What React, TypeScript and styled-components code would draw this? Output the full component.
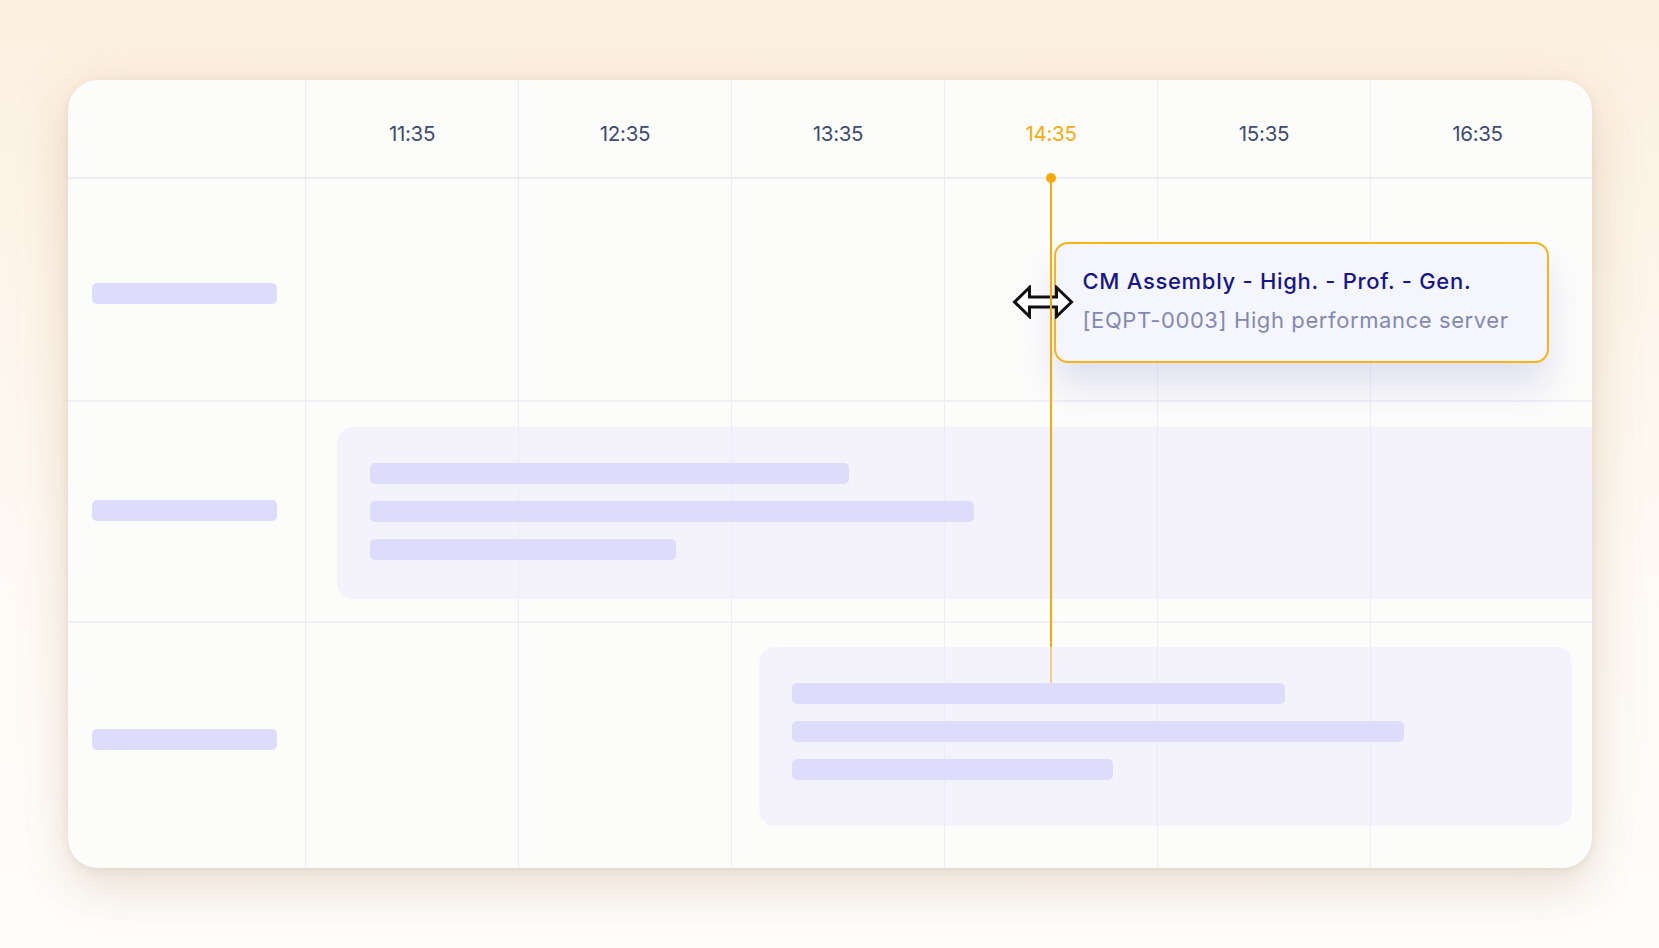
import React from "react";
import styled, { createGlobalStyle } from "styled-components";

// timeline scale: the first slot column starts at 11:05, one column per hour
const LABEL_COL = 237;
const HOUR_WIDTH = 213;
const DAY_START = 11 * 60 + 5;

const toX = (time: string) => {
  const [h, m] = time.split(":").map(Number);
  return LABEL_COL + ((h * 60 + m - DAY_START) * HOUR_WIDTH) / 60;
};

const SLOTS = ["11:35", "12:35", "13:35", "14:35", "15:35", "16:35"];
const NOW = "14:35";

interface Booking {
  start: string;
  end: string;
  top: number;
  height: number;
  lines: number[];
  coversNow?: boolean;
}

interface Resource {
  height: number;
  labelShift: number;
  booking?: Booking;
}

const resources: Resource[] = [
  { height: 223, labelShift: 4 },
  {
    height: 221,
    labelShift: -1,
    booking: { start: "11:14", end: "17:40", top: 25, height: 172, lines: [479, 604, 306] },
  },
  {
    height: 246,
    labelShift: -7,
    booking: {
      start: "13:13",
      end: "17:02",
      top: 24,
      height: 179,
      lines: [493, 612, 321],
      coversNow: true,
    },
  },
];

const GlobalStyle = createGlobalStyle`
  html, body {
    margin: 0;
    padding: 0;
  }
  body {
    font-family: Inter, "Noto Sans", "Liberation Sans", sans-serif;
    -webkit-font-smoothing: antialiased;
  }
`;

const ResizeCursor = () => (
  <svg width="62" height="34" viewBox="0 0 62 34">
    <path
      d="M2.5 17 L17.5 2.5 L17.5 12 L44.5 12 L44.5 2.5 L59.5 17 L44.5 31.5 L44.5 22 L17.5 22 L17.5 31.5 Z"
      fill="#ffffff"
      stroke="#111111"
      strokeWidth="3"
      strokeLinejoin="miter"
    />
  </svg>
);

const App = () => {
  const nowX = toX(NOW);

  return (
    <Page>
      <GlobalStyle />
      <Card>
        <HeaderRow>
          <HeaderCell />
          {SLOTS.map((slot) => (
            <HeaderCell key={slot}>
              <SlotLabel active={slot === NOW}>{slot}</SlotLabel>
            </HeaderCell>
          ))}
        </HeaderRow>

        {resources.map((res, i) => (
          <ResourceRow key={i} rowHeight={res.height} last={i === resources.length - 1}>
            <LabelCell>
              <Skeleton style={{ width: 185, transform: `translateY(${res.labelShift}px)` }} />
            </LabelCell>
            {SLOTS.map((slot) => (
              <SlotCell key={slot} />
            ))}
            {res.booking && (
              <BookingBlock
                raised={!!res.booking.coversNow}
                style={{
                  left: toX(res.booking.start),
                  width: toX(res.booking.end) - toX(res.booking.start),
                  top: res.booking.top,
                  height: res.booking.height,
                }}
              >
                {res.booking.lines.map((w, j) => (
                  <Skeleton key={j} style={{ width: w }} />
                ))}
              </BookingBlock>
            )}
          </ResourceRow>
        ))}

        <NowLine style={{ left: nowX - 1 }}>
          <NowDot />
        </NowLine>

        <Tooltip style={{ left: nowX + 3 }}>
          <TooltipTitle>CM Assembly - High. - Prof. - Gen.</TooltipTitle>
          <TooltipSub>[EQPT-0003] High performance server</TooltipSub>
        </Tooltip>

        <CursorWrap style={{ left: nowX - 39 }}>
          <ResizeCursor />
        </CursorWrap>
      </Card>
    </Page>
  );
};

const Page = styled.div`
  width: 1659px;
  height: 948px;
  box-sizing: border-box;
  padding: 80px 67px 0 68px;
  background: linear-gradient(180deg, #fcf0e0 0%, #fdf5ea 30%, #fefaf5 65%, #fefdfb 100%);
  overflow: hidden;
`;

const Card = styled.div`
  position: relative;
  width: 1524px;
  height: 788px;
  border-radius: 30px;
  background: #fcfcfb;
  overflow: hidden;
  box-shadow: 0 2px 8px rgba(120, 90, 60, 0.1), 0 26px 44px rgba(160, 120, 80, 0.15),
    0 0 60px rgba(190, 150, 100, 0.12);
`;

const gridColumns = `${LABEL_COL}px repeat(5, ${HOUR_WIDTH}px) 1fr`;

const HeaderRow = styled.div`
  display: grid;
  grid-template-columns: ${gridColumns};
  height: 99px;
  border-bottom: 2px solid #ebebf2;
  box-sizing: border-box;
`;

const HeaderCell = styled.div`
  display: flex;
  align-items: center;
  justify-content: center;
  padding-top: 10px;
  & + & {
    border-left: 1px solid #ededf6;
  }
  &:last-child {
    padding-right: 8px;
  }
`;

const SlotLabel = styled.span<{ active: boolean }>`
  font-size: 20.5px;
  font-weight: 400;
  letter-spacing: -0.3px;
  color: ${(p) => (p.active ? "#f7ab0c" : "#3f4b70")};
`;

const ResourceRow = styled.div<{ rowHeight: number; last: boolean }>`
  position: relative;
  display: grid;
  grid-template-columns: ${gridColumns};
  height: ${(p) => p.rowHeight}px;
  box-sizing: border-box;
  border-bottom: ${(p) => (p.last ? "none" : "2px solid #efeff8")};
`;

const LabelCell = styled.div`
  display: flex;
  align-items: center;
  padding-left: 24px;
`;

const SlotCell = styled.div`
  border-left: 1px solid #ececf7;
`;

const Skeleton = styled.div`
  height: 21px;
  border-radius: 5px;
  background: #dedcfb;
`;

const BookingBlock = styled.div<{ raised: boolean }>`
  position: absolute;
  box-sizing: border-box;
  display: flex;
  flex-direction: column;
  align-items: flex-start;
  gap: 17px;
  padding: 36px 0 0 33px;
  border-radius: 16px;
  background: rgba(236, 234, 252, 0.55);
  z-index: ${(p) => (p.raised ? 5 : 1)};
`;

const NowLine = styled.div`
  position: absolute;
  top: 98px;
  width: 2px;
  height: 506px;
  background: #f7a90a;
  z-index: 4;
`;

const NowDot = styled.div`
  position: absolute;
  top: -5px;
  left: -4px;
  width: 10px;
  height: 10px;
  border-radius: 50%;
  background: #f7a90a;
`;

const Tooltip = styled.div`
  position: absolute;
  top: 162px;
  width: 495px;
  height: 121px;
  box-sizing: border-box;
  padding: 22px 0 0 27px;
  border: 2px solid #f7b417;
  border-radius: 14px;
  background: #f5f5fd;
  box-shadow: 0 24px 36px rgba(120, 118, 200, 0.2);
  z-index: 2;
`;

const TooltipTitle = styled.div`
  font-size: 22px;
  font-weight: 500;
  line-height: 30px;
  letter-spacing: 0.7px;
  color: #16168a;
  white-space: nowrap;
`;

const TooltipSub = styled.div`
  margin-top: 9px;
  font-size: 22px;
  font-weight: 400;
  line-height: 30px;
  letter-spacing: 0.6px;
  color: #8389b2;
  white-space: nowrap;
`;

const CursorWrap = styled.div`
  position: absolute;
  top: 205px;
  line-height: 0;
  z-index: 3;
`;

export default App;
